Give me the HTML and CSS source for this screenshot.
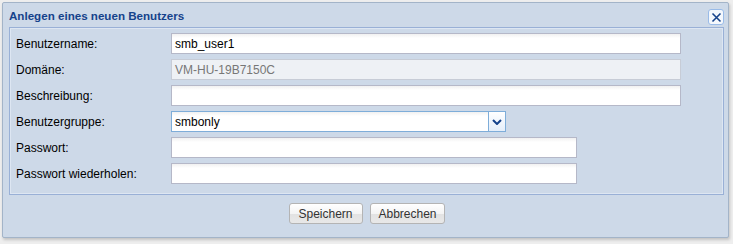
FILE: index.html
```html
<!DOCTYPE html>
<html>
<head>
<meta charset="utf-8">
<link rel="stylesheet" href="styles.css">
</head>
<body>
<div class="window">
  <div class="header">
    <span class="title">Anlegen eines neuen Benutzers</span>
    <span class="close"><svg width="11" height="11" viewBox="0 0 11 11"><path d="M1.5 1.5 L9.5 9.5 M9.5 1.5 L1.5 9.5" stroke="#15428b" stroke-width="1.6" fill="none"/></svg></span>
  </div>
  <div class="body">
    <div class="row"><label>Benutzername:</label><div class="input w-full">smb_user1</div></div>
    <div class="row"><label>Domäne:</label><div class="input w-full disabled">VM-HU-19B7150C</div></div>
    <div class="row"><label>Beschreibung:</label><div class="input w-full"></div></div>
    <div class="row"><label>Benutzergruppe:</label><div class="combo"><div class="input focus">smbonly</div><span class="trigger"><svg width="10" height="6" viewBox="0 0 10 6"><path d="M1 1 L5 5 L9 1" stroke="#15428b" stroke-width="2" fill="none"/></svg></span></div></div>
    <div class="row"><label>Passwort:</label><div class="input w-pw"></div></div>
    <div class="row"><label>Passwort wiederholen:</label><div class="input w-pw"></div></div>
  </div>
  <div class="footer">
    <button class="btn">Speichern</button>
    <button class="btn">Abbrechen</button>
  </div>
</div>
</body>
</html>
```
FILE: styles.css
```css
html, body { margin: 0; padding: 0; }
body {
  background: #eeeeee;
  font-family: "Liberation Sans", Arial, sans-serif;
  font-size: 12px;
  width: 733px;
  height: 244px;
  overflow: hidden;
}
.window {
  box-sizing: border-box;
  margin: 2px 0 0 2px;
  width: 727px;
  height: 236px;
  background: #cdd9e8;
  border: 1px solid #a3b4c8;
  border-radius: 2px;
  box-shadow: 1px 2px 3px rgba(0,0,0,0.18);
  display: flex;
  flex-direction: column;
  padding: 0 4px 0 6px;
}
.header {
  height: 24px;
  display: flex;
  align-items: center;
  justify-content: space-between;
}
.title {
  font-family: "Liberation Sans", Arial, sans-serif;
  font-size: 11.6px;
  font-weight: bold;
  color: #15428b;
  margin-top: 1px;
}
.close {
  box-sizing: border-box;
  width: 16px;
  height: 16px;
  border: 1px solid #99bbe8;
  border-radius: 3px;
  background: #f4f8fd;
  display: flex;
  align-items: center;
  justify-content: center;
  margin-top: 4px;
}
.body {
  box-sizing: border-box;
  height: 168px;
  border: 1px solid #99b0d6;
  box-shadow: inset 0 0 0 1px #dde6f2;
  padding: 5px 0 0 6px;
  display: flex;
  flex-direction: column;
  gap: 5px;
}
.row {
  display: flex;
  align-items: center;
  height: 21px;
}
.row label {
  width: 155px;
  color: #000;
}
.input {
  box-sizing: border-box;
  height: 21px;
  border: 1px solid #b5b8c8;
  background: linear-gradient(#f1f1f1 0, #ffffff 4px, #ffffff 100%);
  padding: 3px 5px 0 3px;
  font-size: 12px;
  color: #000;
}
.w-full { width: 510px; }
.w-pw { width: 406px; }
.disabled {
  background: #eef1f5;
  color: #777;
  border-color: #c7ccd6;
}
.combo {
  display: flex;
  width: 335px;
}
.combo .input { flex: 1; border-color: #7eadd9; border-right: none; }
.trigger {
  box-sizing: border-box;
  width: 18px;
  height: 21px;
  border: 1px solid #7eadd9;
  background: linear-gradient(#ffffff, #e4eefa);
  display: flex;
  align-items: center;
  justify-content: center;
}
.footer {
  display: flex;
  justify-content: center;
  gap: 7px;
  padding-top: 8px;
}
.btn {
  box-sizing: border-box;
  height: 21px;
  padding: 0 8px;
  font-family: "Liberation Sans", Arial, sans-serif;
  font-size: 12px;
  color: #333;
  border: 1px solid #b4b4b4;
  border-radius: 3px;
  background: linear-gradient(#ffffff 0, #f4f4f4 50%, #e2e2e2 51%, #e8e8e8 100%);
  box-shadow: inset 0 1px 0 #fff;
}
.btn:first-child { width: 74px; }
.btn:last-child { width: 75px; }
```
